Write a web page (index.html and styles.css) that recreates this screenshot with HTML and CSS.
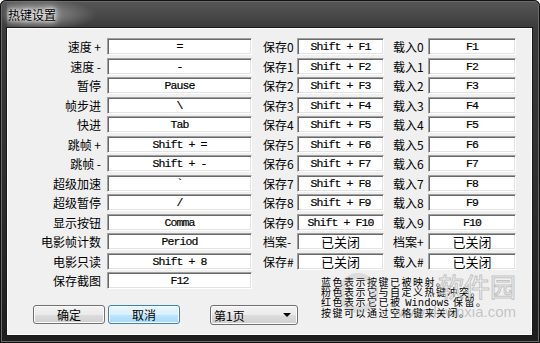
FILE: index.html
```html
<!DOCTYPE html>
<html lang="zh-CN">
<head>
  <meta charset="UTF-8">
  <title>热键设置</title>
  <link rel="stylesheet" href="styles.css">
</head>
<body>

  <div class="window">
    <div class="titlebar"><span class="title">热键设置</span></div>

    <div class="client">
      <div class="keys">
        <div class="lbl-left">速度 +</div><div class="key">=</div>
        <div class="lbl-mid">保存0</div><div class="key">Shift + F1</div>
        <div class="lbl-right">载入0</div><div class="key">F1</div>

        <div class="lbl-left">速度 -</div><div class="key">-</div>
        <div class="lbl-mid">保存1</div><div class="key">Shift + F2</div>
        <div class="lbl-right">载入1</div><div class="key">F2</div>

        <div class="lbl-left">暂停</div><div class="key">Pause</div>
        <div class="lbl-mid">保存2</div><div class="key">Shift + F3</div>
        <div class="lbl-right">载入2</div><div class="key">F3</div>

        <div class="lbl-left">帧步进</div><div class="key">\</div>
        <div class="lbl-mid">保存3</div><div class="key">Shift + F4</div>
        <div class="lbl-right">载入3</div><div class="key">F4</div>

        <div class="lbl-left">快进</div><div class="key">Tab</div>
        <div class="lbl-mid">保存4</div><div class="key">Shift + F5</div>
        <div class="lbl-right">载入4</div><div class="key">F5</div>

        <div class="lbl-left">跳帧 +</div><div class="key">Shift + =</div>
        <div class="lbl-mid">保存5</div><div class="key">Shift + F6</div>
        <div class="lbl-right">载入5</div><div class="key">F6</div>

        <div class="lbl-left">跳帧 -</div><div class="key">Shift + -</div>
        <div class="lbl-mid">保存6</div><div class="key">Shift + F7</div>
        <div class="lbl-right">载入6</div><div class="key">F7</div>

        <div class="lbl-left">超级加速</div><div class="key">`</div>
        <div class="lbl-mid">保存7</div><div class="key">Shift + F8</div>
        <div class="lbl-right">载入7</div><div class="key">F8</div>

        <div class="lbl-left">超级暂停</div><div class="key">/</div>
        <div class="lbl-mid">保存8</div><div class="key">Shift + F9</div>
        <div class="lbl-right">载入8</div><div class="key">F9</div>

        <div class="lbl-left">显示按钮</div><div class="key">Comma</div>
        <div class="lbl-mid">保存9</div><div class="key">Shift + F10</div>
        <div class="lbl-right">载入9</div><div class="key">F10</div>

        <div class="lbl-left">电影帧计数</div><div class="key">Period</div>
        <div class="lbl-mid">档案-</div><div class="key off">已关闭</div>
        <div class="lbl-right">档案+</div><div class="key off">已关闭</div>

        <div class="lbl-left">电影只读</div><div class="key">Shift + 8</div>
        <div class="lbl-mid">保存#</div><div class="key off">已关闭</div>
        <div class="lbl-right">载入#</div><div class="key off">已关闭</div>
      </div>

      <div class="lower">
        <div class="lower-left">
          <div class="last-row">
            <div class="lbl-left">保存截图</div><div class="key">F12</div>
          </div>
          <div class="actions">
            <button class="btn">确定</button>
            <button class="btn focused">取消</button>
            <div class="select">
              <span>第1页</span>
              <span class="arrow"></span>
            </div>
          </div>
        </div>
        <div class="notes">
          <div>蓝色表示按键已被映射。</div>
          <div>粉色表示它与自定义热键冲突。</div>
          <div>红色表示它已被 <span class="mono">Windows</span> 保留。</div>
          <div>按键可以通过空格键来关闭。</div>
        </div>
      </div>

      <div class="watermark">
        <div class="wm-logo"></div>
        <div class="wm-name">软件园</div>
        <div class="wm-url">www.downxia.com</div>
      </div>
    </div>
  </div>

</body>
</html>
```

FILE: styles.css
```css
* {
  margin: 0;
  padding: 0;
  box-sizing: border-box;
}

body {
  background: #fff;
  font-family: "Noto Sans CJK SC", "Liberation Sans", sans-serif;
  font-size: 12px;
  color: #000;
}

.window {
  width: 540px;
  height: 343px;
  display: flex;
  flex-direction: column;
  padding: 0 8px 8px 7px;
  background: linear-gradient(to bottom, #585858 0, #3b3b3b 28px, #2c2c2c 60%, #1e1e1e 100%);
  border-radius: 6px 6px 0 0;
  box-shadow: inset 0 0 0 1px #111, inset 0 0 0 2px #6a6a6a;
}

.titlebar {
  height: 28px;
  display: flex;
  align-items: center;
  padding-left: 1px;
  background: radial-gradient(ellipse 60px 16px at 30px 15px, rgba(255, 255, 255, 0.45), rgba(255, 255, 255, 0) 100%);
}

.title {
  font-size: 12px;
  color: #000;
  text-shadow: 0 0 6px #fff, 0 0 10px #fff, 0 0 3px #fff;
}

.client {
  flex: 1;
  position: relative;
  background: #f0f0f0;
  border: 1px solid #fff;
  box-shadow: 0 0 0 1px #1a1a1a;
  padding-top: 9px;
  overflow: hidden;
}

.keys {
  display: grid;
  grid-template-columns: 99px 145px 45px 87px 44px 88px;
  grid-auto-rows: 17px;
  row-gap: 2.5px;
}

.lbl-left {
  text-align: right;
  padding-right: 6px;
  line-height: 17px;
  white-space: nowrap;
}

.lbl-mid {
  padding-left: 11px;
  line-height: 17px;
  white-space: nowrap;
}

.lbl-right {
  padding-left: 9px;
  line-height: 17px;
  white-space: nowrap;
}

.key {
  height: 17px;
  background: #fff;
  border-style: solid;
  border-width: 1px;
  border-color: #a0a0a0 #fff #fff #a0a0a0;
  box-shadow: inset 1px 1px 0 #696969, inset -1px -1px 0 #e3e3e3;
  font-family: "Liberation Mono", "DejaVu Sans Mono", monospace;
  font-size: 11.5px;
  letter-spacing: -0.9px;
  line-height: 15px;
  text-align: center;
  white-space: pre;
  -webkit-text-stroke: 0.2px #000;
}

.key.off {
  font-family: "Noto Sans CJK SC", sans-serif;
  font-size: 13px;
  letter-spacing: 0;
  line-height: 15px;
  -webkit-text-stroke: 0;
}

.lower {
  display: flex;
  margin-top: 2.5px;
}

.lower-left {
  width: 313px;
  flex-shrink: 0;
}

.last-row {
  display: grid;
  grid-template-columns: 99px 145px;
  height: 17px;
}

.actions {
  display: flex;
  align-items: flex-start;
  margin-top: 16px;
  padding-left: 25px;
}

.btn {
  width: 72px;
  height: 19px;
  margin-right: 3px;
  font-family: "Noto Sans CJK SC", sans-serif;
  font-size: 12px;
  line-height: 16px;
  color: #000;
  border: 1px solid #707070;
  border-radius: 3px;
  background: linear-gradient(to bottom, #f2f2f2 0, #ebebeb 50%, #dddddd 51%, #cfcfcf 100%);
  box-shadow: inset 0 0 0 1px #fcfcfc;
}

.btn.focused {
  border-color: #3c7fb1;
  background: linear-gradient(to bottom, #eaf6fd 0, #d9f0fc 50%, #bee6fd 51%, #a7d9f5 100%);
  box-shadow: inset 0 0 0 1px #fcfdfe;
}

.select {
  width: 88px;
  height: 20px;
  margin-left: 27px;
  display: flex;
  align-items: center;
  justify-content: space-between;
  padding: 0 6px 0 3px;
  border: 1px solid #707070;
  border-radius: 3px;
  background: linear-gradient(to bottom, #f2f2f2 0, #ebebeb 50%, #dddddd 51%, #cfcfcf 100%);
  box-shadow: inset 0 0 0 1px #fcfcfc;
  font-size: 12px;
}

.arrow {
  width: 0;
  height: 0;
  border-left: 4px solid transparent;
  border-right: 4px solid transparent;
  border-top: 4px solid #000;
}

.notes {
  margin-top: 5px;
  font-size: 10px;
  letter-spacing: 1.5px;
  line-height: 10px;
  color: #000;
  white-space: nowrap;
}

.mono {
  font-family: "Liberation Mono", monospace;
  font-size: 10.5px;
  letter-spacing: 0;
}

.watermark {
  position: absolute;
  left: 320px;
  top: 236px;
  width: 200px;
  height: 60px;
  pointer-events: none;
}

.wm-logo {
  position: absolute;
  left: 10px;
  top: 8px;
  width: 40px;
  height: 40px;
  border-radius: 50%;
  border: 6px solid rgba(150, 150, 150, 0.22);
}

.wm-name {
  position: absolute;
  right: 12px;
  top: 6px;
  font-size: 26px;
  line-height: 30px;
  color: rgba(255, 255, 255, 0.5);
  -webkit-text-stroke: 1px rgba(150, 150, 150, 0.55);
}

.wm-url {
  position: absolute;
  right: 12px;
  top: 39px;
  font-family: "Liberation Sans", sans-serif;
  font-size: 15px;
  line-height: 16px;
  color: rgba(140, 140, 140, 0.45);
}
```
